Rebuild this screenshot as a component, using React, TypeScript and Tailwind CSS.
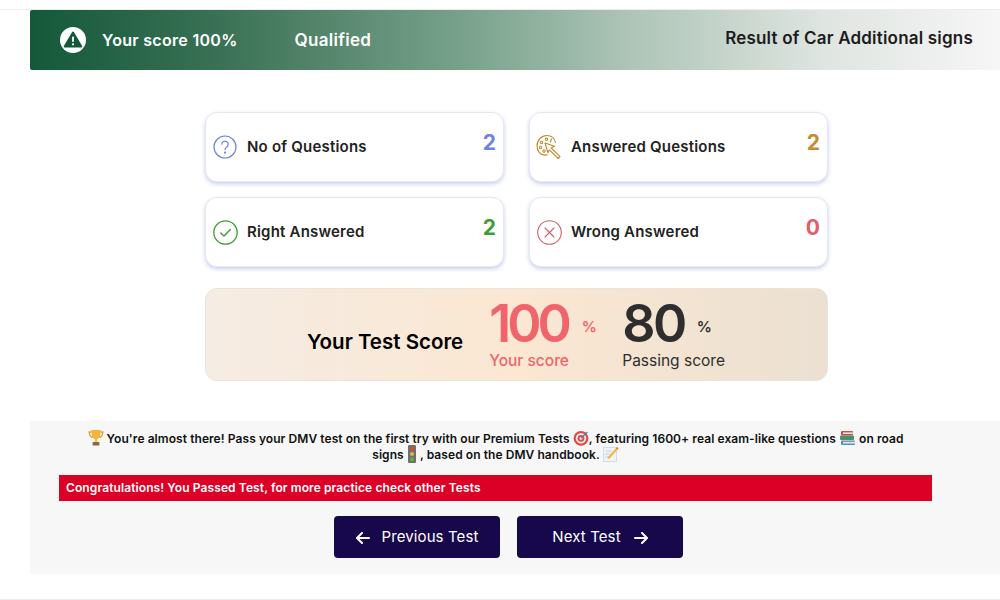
import React from "react";

const Trophy = () => (
  <svg viewBox="0 0 16 18" className="inline-block w-[16px] h-[18px] my-[-4px] align-[0px]">
    <path d="M3.500 3H1.200c0 3.400 1.200 5 3.600 5.400M12.500 3h2.300c0 3.400-1.200 5-3.600 5.400" fill="none" stroke="#d9a02c" strokeWidth="1.3" />
    <path d="M3.200 1h9.600c0 5-1 8-3.600 9.200v2.600H6.800v-2.600C4.200 9 3.200 6 3.200 1z" fill="#f0b63c" />
    <rect x="4.600" y="13" width="6.800" height="3.600" rx=".5" fill="#8a6a3a" />
  </svg>
);
const Target = () => (
  <svg viewBox="0 0 16 16" className="inline-block w-[16px] h-[16px] my-[-4px] align-[1px]">
    <circle cx="8" cy="8.300" r="7.400" fill="#e04848" />
    <circle cx="8" cy="8.300" r="5.200" fill="#f6eaea" />
    <circle cx="8" cy="8.300" r="3.400" fill="#e04848" />
    <circle cx="8" cy="8.300" r="1.500" fill="#f6eaea" />
    <path d="M8 8.300 14.400 2" stroke="#4a8bb0" strokeWidth="1.3" />
  </svg>
);
const Books = () => (
  <svg viewBox="0 0 17 16" className="inline-block w-[17px] h-[16px] my-[-4px] align-[1px]">
    <rect x="2" y="1" width="12" height="4.400" rx="1" fill="#c94f4f" />
    <rect x="1" y="5.600" width="14" height="4.400" rx="1" fill="#4f8f6a" />
    <rect x="2" y="10.400" width="14" height="4.600" rx="1" fill="#4a90c0" />
    <rect x="4" y="2.400" width="10" height="1.600" fill="#e9e4da" />
    <rect x="4" y="11.800" width="12" height="1.800" fill="#e9e4da" />
  </svg>
);
const Light = () => (
  <svg viewBox="0 0 10 18" className="inline-block w-[10px] h-[18px] my-[-4px] align-[0px]">
    <rect x="1" y="0" width="8" height="18" rx="1.200" fill="#6f6f6f" />
    <circle cx="5" cy="3.600" r="2.100" fill="#d8483c" />
    <circle cx="5" cy="9" r="2.100" fill="#e6b23a" />
    <circle cx="5" cy="14.400" r="2.100" fill="#5fae4a" />
  </svg>
);
const Memo = () => (
  <svg viewBox="0 0 16 16" className="inline-block w-[16px] h-[16px] my-[-4px] align-[1px]">
    <rect x="0.500" y="1.500" width="13" height="14" fill="#eef3f8" stroke="#c8d6e4" strokeWidth=".8" />
    <path d="M2.500 5h6M2.500 8h4M2.500 11h3" stroke="#b9c9d9" strokeWidth=".8" />
    <path d="M14 1 15.400 2.400 7 12l-2.400 1 .8-2.600z" fill="#f2b63c" />
    <path d="M14 1 15.400 2.400 14.400 3.600 13 2.200z" fill="#e0705a" />
  </svg>
);

const QuestionIcon = () => (
  <svg viewBox="0 0 24 24" className="w-[24px] h-[24px]" fill="none" stroke="#6c84dc" strokeWidth="1.2" strokeLinecap="round">
    <circle cx="12" cy="12" r="11" />
    <path d="M8.800 9.200a3.200 3.200 0 1 1 5 2.700c-1 .7-1.800 1.300-1.800 2.800" />
    <circle cx="12" cy="17.600" r=".5" fill="#6c84dc" />
  </svg>
);
const CheckIcon = () => (
  <svg viewBox="0 0 25 25" className="w-[25px] h-[25px]" fill="none" stroke="#3f9c36" strokeWidth="1.3" strokeLinecap="round" strokeLinejoin="round">
    <circle cx="12.500" cy="12.500" r="11.700" />
    <path d="M7.800 13l3.200 3 6.400-6.600" strokeWidth="1.400" />
  </svg>
);
const CrossIcon = () => (
  <svg viewBox="0 0 25 25" className="w-[25px] h-[25px]" fill="none" stroke="#d0606a" strokeWidth="1.1" strokeLinecap="round">
    <circle cx="12.500" cy="12.500" r="11.800" />
    <path d="M8 8l9 9M17 8l-9 9" />
  </svg>
);
const PaletteIcon = () => (
  <svg viewBox="0 0 26 26" className="w-[26px] h-[26px]" fill="none" stroke="#c08a2c" strokeWidth="1.1" strokeLinejoin="round" strokeLinecap="round">
    <path d="M11.500 20.800c-.9.300-1.900.4-2.900.3C4.300 20.700 1 17 1 12 1 6 5.500 1.500 11 1.500c4.300 0 7.800 2.800 8.400 7" />
    <circle cx="5.500" cy="8.500" r="1.200" />
    <circle cx="4.500" cy="13.500" r="1.200" />
    <circle cx="10.500" cy="5.300" r="1.200" />
    <circle cx="8" cy="17" r="1.200" />
    <path d="M15.500 5l-1.200 3" />
    <path d="M9 9l9.500 3.200-3.300 1.800 8.800 8.700-1.800 1.800-8.800-8.700L12 18.800z" fill="#fff" />
  </svg>
);

const Card = ({ icon, label, value, color }: { icon: React.ReactNode; label: string; value: string; color: string }) => (
  <div className="relative flex h-[70px] w-[299px] items-center rounded-[12px] border border-[#e6e8f0] bg-white pl-[6px] shadow-[0_2px_4px_#c9cff0]">
    <div className="flex w-[26px] justify-center">{icon}</div>
    <span className="ml-[9px] text-[15px] font-semibold tracking-[0.2px] text-[#222]">{label}</span>
    <span className={`absolute right-[7px] top-[18px] text-[21px] font-bold leading-[24px] ${color}`}>{value}</span>
  </div>
);

export default function App() {
  return (
    <div className="h-[600px] w-[1000px] overflow-hidden bg-white font-['Inter','Liberation_Sans',sans-serif]">
      <div className="h-[10px] border-b border-[#ececec]" />
      <div className="pl-[30px]">
        <div className="flex h-[60px] items-center rounded-l-[2px] bg-[linear-gradient(90deg,#14583a_0%,#3b7256_20%,#79a28c_45%,#aec5b7_62%,#dfe5e1_82%,#f6f6f6_100%)] pl-[30px] pr-[27px]">
          <svg viewBox="0 0 26 26" className="h-[26px] w-[26px]">
            <circle cx="13" cy="13" r="13" fill="#fff" />
            <path d="M13 5.500 21.300 19.500H4.700z" fill="#14583a" stroke="#14583a" strokeWidth="2" strokeLinejoin="round" />
            <rect x="12.100" y="9.500" width="1.800" height="5.500" rx=".8" fill="#fff" />
            <circle cx="13" cy="17.300" r="1.100" fill="#fff" />
          </svg>
          <span className="ml-[16px] text-[16px] font-semibold tracking-[0.3px] text-white">Your score 100%</span>
          <span className="ml-[57px] mt-[2px] text-[17px] font-semibold tracking-[0.3px] text-white">Qualified</span>
          <span className="mb-[2px] ml-auto text-[17px] font-semibold tracking-[0.2px] text-[#1c1c1c]">Result of Car Additional signs</span>
        </div>
      </div>

      <div className="mt-[42px] ml-[205px] w-[623px]">
        <div className="grid grid-cols-[299px_299px] gap-x-[25px] gap-y-[15px]">
          <Card icon={<QuestionIcon />} label="No of Questions" value="2" color="text-[#6c84dc]" />
          <Card icon={<PaletteIcon />} label="Answered Questions" value="2" color="text-[#c98a2e]" />
          <Card icon={<CheckIcon />} label="Right Answered" value="2" color="text-[#3f9c36]" />
          <Card icon={<CrossIcon />} label="Wrong Answered" value="0" color="text-[#e0606a]" />
        </div>

        <div className="mt-[21px] flex h-[93px] items-center rounded-[12px] border border-[#e9e4dc] bg-[linear-gradient(90deg,#f5ece3_0%,#fbe7d2_50%,#ebe0d2_100%)] pl-[101px]">
          <span className="mt-[16px] text-[20.500px] font-semibold text-black">Your Test Score</span>
          <div className="ml-[26px] flex w-[133px] flex-col">
            <div className="flex items-center">
              <span className="text-[52px] font-semibold leading-[50px] tracking-[-4px] text-[#f0646c]">100</span>
              <span className="ml-[14px] mt-[8px] text-[15px] font-semibold text-[#f0646c]">%</span>
            </div>
            <span className="mt-[2px] text-[15.500px] font-medium leading-[20px] text-[#f0646c]">Your score</span>
          </div>
          <div className="flex flex-col">
            <div className="flex items-center">
              <span className="text-[52px] font-semibold leading-[50px] tracking-[-2.500px] text-[#2e2e2e]">80</span>
              <span className="ml-[12px] mt-[8px] text-[15px] font-semibold text-[#2e2e2e]">%</span>
            </div>
            <span className="mt-[2px] text-[15.500px] leading-[20px] text-[#2e2e2e]">Passing score</span>
          </div>
        </div>
      </div>

      <div className="ml-[30px] mt-[40px] h-[153px] bg-[#f7f7f7] pl-[29px] pt-[10px]">
        <div className="w-[873px]">
          <p className="px-[20px] text-center text-[12px] font-semibold leading-[16px] tracking-[0.07px] text-[#111]">
            <Trophy /> You're almost there! Pass your DMV test on the first try with our Premium Tests <Target />, featuring 1600+ real exam-like questions <Books /> on road signs <Light /> , based on the DMV handbook. <Memo />
          </p>
          <div className="mt-[12px] flex h-[26px] items-center bg-[#dc0026] pl-[7px] text-[12px] font-semibold tracking-[0.1px] text-white">
            Congratulations! You Passed Test, for more practice check other Tests
          </div>
          <div className="mt-[15px] flex gap-[17px] pl-[275px]">
            <button className="flex h-[42px] w-[166px] items-center justify-center gap-[12px] rounded-[4px] bg-[#16084a] pt-[1px] text-[15px] font-normal tracking-[0.1px] text-white">
              <svg viewBox="0 0 14 12" className="h-[12px] w-[14px]" fill="none" stroke="#fff" strokeWidth="2" strokeLinecap="round" strokeLinejoin="round"><path d="M13 6H1.500M6 1 1 6l5 5" /></svg>
              Previous Test
            </button>
            <button className="flex h-[42px] w-[166px] items-center justify-center gap-[13px] rounded-[4px] bg-[#16084a] pt-[1px] text-[15px] font-normal tracking-[0.1px] text-white">
              Next Test
              <svg viewBox="0 0 14 12" className="h-[12px] w-[14px]" fill="none" stroke="#fff" strokeWidth="2" strokeLinecap="round" strokeLinejoin="round"><path d="M1 6h11.500M8 1l5 5-5 5" /></svg>
            </button>
          </div>
        </div>
      </div>
      <div className="mt-[25px] border-t border-[#ececec]" />
    </div>
  );
}
